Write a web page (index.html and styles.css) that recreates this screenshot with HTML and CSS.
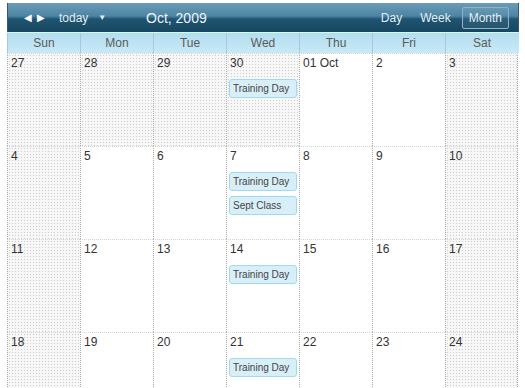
FILE: index.html
```html
<!DOCTYPE html>
<html lang="en">
  <head>
    <meta charset="UTF-8" />
    <title>Calendar</title>
    <link rel="stylesheet" href="styles.css">
  </head>
  <body>
    <div class="calendar">
      <div class="toolbar">
        <div class="nav">
          <span class="arrow">&#9664;</span>
          <span class="arrow">&#9654;</span>
          <span class="today">today</span>
          <span class="caret">&#9660;</span>
        </div>
        <div class="title">Oct, 2009</div>
        <div class="views">
          <span class="view">Day</span>
          <span class="view">Week</span>
          <span class="view active">Month</span>
        </div>
      </div>

      <div class="weekdays">
        <div>Sun</div>
        <div>Mon</div>
        <div>Tue</div>
        <div>Wed</div>
        <div>Thu</div>
        <div>Fri</div>
        <div>Sat</div>
      </div>

      <div class="month">
        <div class="cell dotted"><span class="num">27</span></div>
        <div class="cell dotted"><span class="num">28</span></div>
        <div class="cell dotted"><span class="num">29</span></div>
        <div class="cell dotted"><span class="num">30</span><div class="event">Training Day</div></div>
        <div class="cell"><span class="num">01 Oct</span></div>
        <div class="cell"><span class="num">2</span></div>
        <div class="cell dotted"><span class="num">3</span></div>

        <div class="cell dotted"><span class="num">4</span></div>
        <div class="cell"><span class="num">5</span></div>
        <div class="cell"><span class="num">6</span></div>
        <div class="cell"><span class="num">7</span><div class="event">Training Day</div><div class="event">Sept Class</div></div>
        <div class="cell"><span class="num">8</span></div>
        <div class="cell"><span class="num">9</span></div>
        <div class="cell dotted"><span class="num">10</span></div>

        <div class="cell dotted"><span class="num">11</span></div>
        <div class="cell"><span class="num">12</span></div>
        <div class="cell"><span class="num">13</span></div>
        <div class="cell"><span class="num">14</span><div class="event">Training Day</div></div>
        <div class="cell"><span class="num">15</span></div>
        <div class="cell"><span class="num">16</span></div>
        <div class="cell dotted"><span class="num">17</span></div>

        <div class="cell dotted"><span class="num">18</span></div>
        <div class="cell"><span class="num">19</span></div>
        <div class="cell"><span class="num">20</span></div>
        <div class="cell"><span class="num">21</span><div class="event">Training Day</div></div>
        <div class="cell"><span class="num">22</span></div>
        <div class="cell"><span class="num">23</span></div>
        <div class="cell dotted"><span class="num">24</span></div>
      </div>
    </div>
  </body>
</html>
```

FILE: styles.css
```css
body {
  margin: 0;
  padding: 0;
  font-family: "Liberation Sans", Arial, sans-serif;
  background-color: #fff;
}

.calendar {
  width: 512px;
  margin: 3px 0 0 7px;
}

.toolbar {
  display: flex;
  align-items: center;
  height: 29px;
  color: #e2eef4;
  background: linear-gradient(#6a9cb8 0%, #4c85a3 45%, #1f5572 55%, #17465f 100%);
  border-left: 1px solid #456;
  border-right: 1px solid #456;
}

.nav {
  display: flex;
  align-items: center;
  box-sizing: border-box;
  width: 138px;
  padding-left: 16px;
  font-size: 12px;
}

.arrow {
  font-size: 10px;
  margin-right: 5px;
  color: #fff;
}

.today {
  margin-left: 9px;
}

.caret {
  font-size: 8px;
  margin-left: 10px;
}

.title {
  flex: 1;
  font-size: 14px;
  color: #eef4f8;
}

.views {
  display: flex;
  align-items: center;
  gap: 4px;
  padding-right: 9px;
  font-size: 12px;
}

.view {
  padding: 3px 6px;
  border: 1px solid transparent;
}

.view.active {
  border: 1px solid #8fb2c6;
  border-radius: 2px;
  background-color: rgba(255, 255, 255, 0.06);
}

.weekdays {
  display: grid;
  grid-template-columns: repeat(7, 73px);
  height: 20px;
  background: linear-gradient(#b4ddef, #c8e9f7);
  border-top: 1px solid #cfe;
}

.weekdays div {
  text-align: center;
  font-size: 12px;
  line-height: 20px;
  color: #5a5a5a;
  border-left: 1px solid #a8c8dc;
}

.month {
  display: grid;
  grid-template-columns: repeat(7, 73px);
  grid-auto-rows: 93px;
}

.cell {
  border-left: 1px dotted #aaa;
  border-top: 1px dotted #d4d4d4;
  padding: 2px 2px 0 3px;
  background-color: #fff;
}

.cell:nth-child(7n) {
  border-right: 1px dotted #aaa;
}

.cell.dotted {
  background-color: #f7f7f7;
  background-image: radial-gradient(circle, #cdcdcd 0.7px, transparent 0.8px);
  background-size: 3px 3px;
}

.num {
  display: block;
  font-size: 12px;
  color: #333;
  height: 21px;
  margin-bottom: 2px;
}

.event {
  height: 17px;
  line-height: 17px;
  margin: 0 0 5px -1px;
  padding-left: 3px;
  font-size: 10px;
  color: #444;
  background-color: #d8eff8;
  border: 1px solid #9edbef;
  border-radius: 3px;
}
```
